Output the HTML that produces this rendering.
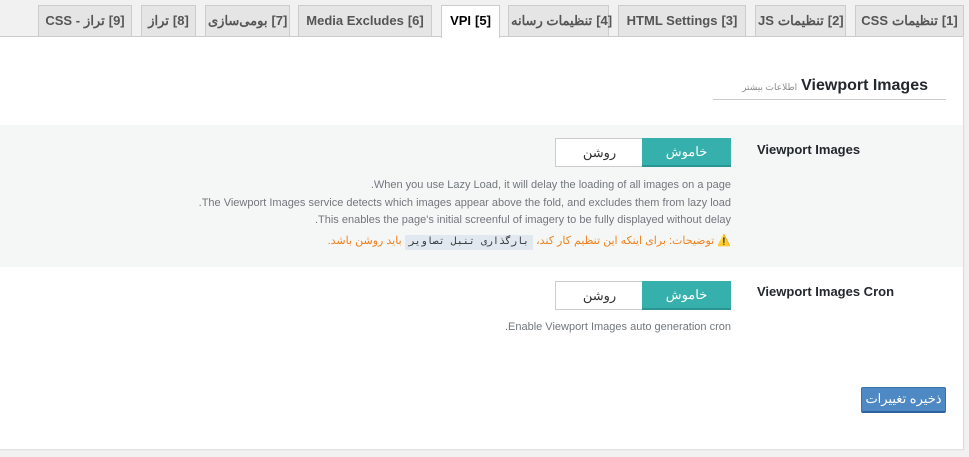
<!DOCTYPE html>
<html><head><meta charset="utf-8"><style>
*{box-sizing:border-box;margin:0;padding:0}
body{width:969px;height:457px;background:#f1f1f1;font-family:"Liberation Sans","Noto Sans CJK SC",sans-serif;position:relative;overflow:hidden}
.tab{position:absolute;top:5px;height:32px;background:#e5e5e5;border:1px solid #ccc;border-bottom:none;font-size:13px;font-weight:bold;color:#555;text-align:center;line-height:30px;white-space:nowrap}
.tab span{display:inline-block;direction:ltr;margin:0 2px}
.tab span.a{direction:rtl}
.tab.act{background:#fff;color:#000;height:33px;z-index:2}
.panel{position:absolute;left:0;top:36px;width:964px;height:413px;background:#fff;border-top:1px solid #ccc;border-right:1px solid #ddd;box-shadow:0 1px 1px #ddd}
.h{position:absolute;right:41px;top:77px;font-size:16px;font-weight:bold;color:#23282d;direction:rtl}
.h small{font-size:9px;font-weight:normal;color:#888;margin-right:4px}
.line{position:absolute;left:713px;width:233px;top:99px;height:1px;background:#ccc}
.band{position:absolute;left:0;top:125px;width:963px;height:142px;background:#f5f7f7}
.lbl{position:absolute;left:757px;font-size:13px;font-weight:bold;color:#23282d}
.tg{position:absolute;left:555px;width:176px;height:29px;border:1px solid #ccc;background:#fff;font-size:13px;direction:rtl}
.tg .on{position:absolute;right:-1px;top:-1px;width:89px;height:29px;background:#35b0ad;color:#fff;text-align:center;line-height:28px;border-bottom:2px solid #2a9592}
.tg .off{position:absolute;left:0;top:0;width:87px;height:27px;text-align:center;line-height:27px;color:#333}
.d{position:absolute;right:238px;font-size:11px;color:#72777c;direction:rtl;white-space:nowrap}
.code{background:#e1e8f0;color:#333;font-family:"Liberation Mono",monospace;font-size:10px;padding:2px 4px}
.btn{position:absolute;left:861px;top:387px;width:85px;height:26px;background:#4f89c4;border:1px solid #3a72aa;border-bottom:2px solid #2c63a0;border-radius:2px;color:#fff;font-size:13px;text-align:center;line-height:22px}
</style></head><body>
<div class="tab" style="left:855px;width:109px"><span>CSS</span><span class="a">تنظیمات</span><span>[1]</span></div>
<div class="tab" style="left:755px;width:91px"><span>JS</span><span class="a">تنظیمات</span><span>[2]</span></div>
<div class="tab" style="left:618px;width:128px"><span>HTML Settings</span><span>[3]</span></div>
<div class="tab" style="left:508px;width:101px"><span class="a">تنظیمات رسانه</span><span>[4]</span></div>
<div class="tab act" style="left:441px;width:59px"><span>VPI</span><span>[5]</span></div>
<div class="tab" style="left:298px;width:134px"><span>Media Excludes</span><span>[6]</span></div>
<div class="tab" style="left:205px;width:85px"><span class="a">بومی‌سازی</span><span>[7]</span></div>
<div class="tab" style="left:141px;width:55px"><span class="a">تراز</span><span>[8]</span></div>
<div class="tab" style="left:38px;width:94px"><span>CSS -</span><span class="a">تراز</span><span>[9]</span></div>
<div class="panel"></div>
<div class="h">Viewport Images<small>اطلاعات بیشتر</small></div>
<div class="line"></div>
<div class="band"></div>
<div class="lbl" style="top:142px">Viewport Images</div>
<div class="tg" style="top:138px"><div class="on">خاموش</div><div class="off">روشن</div></div>
<div class="d" style="top:179px">When you use Lazy Load, it will delay the loading of all images on a page.</div>
<div class="d" style="top:197px">The Viewport Images service detects which images appear above the fold, and excludes them from lazy load.</div>
<div class="d" style="top:214px">This enables the page's initial screenful of imagery to be fully displayed without delay.</div>
<div class="d" style="top:234px;color:#f0821e">⚠️ توضیحات: برای اینکه این تنظیم کار کند، <span class="code">بارگذاری تنبل تصاویر</span> باید روشن باشد.</div>
<div class="lbl" style="top:284px">Viewport Images Cron</div>
<div class="tg" style="top:281px"><div class="on">خاموش</div><div class="off">روشن</div></div>
<div class="d" style="top:321px">Enable Viewport Images auto generation cron.</div>
<div class="btn">ذخیره تغییرات</div>
</body></html>
